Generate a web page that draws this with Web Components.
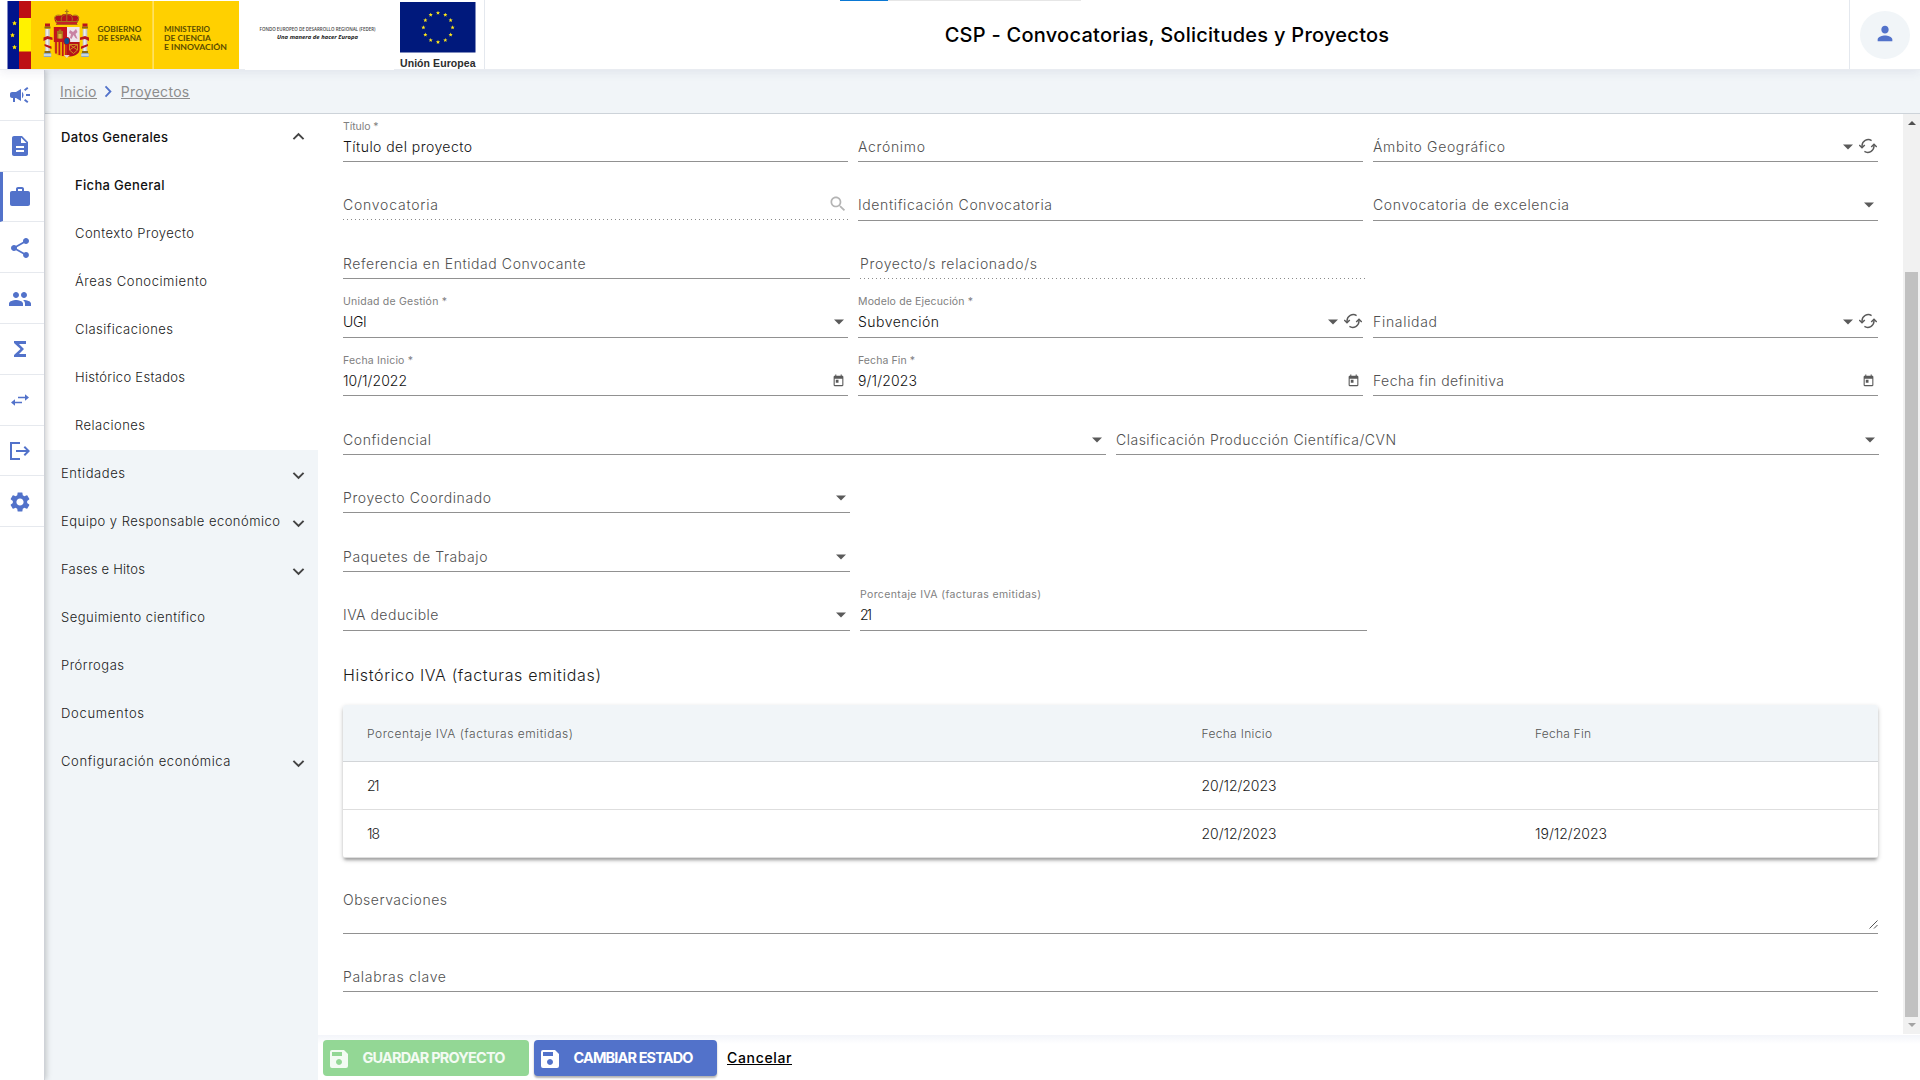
<!DOCTYPE html>
<html lang="es">
<head>
<meta charset="utf-8">
<title>CSP - Convocatorias, Solicitudes y Proyectos</title>
<style>
html,body{margin:0;height:100%;overflow:hidden;background:#fff}
body{font-family:Inter,"Open Sans",sans-serif;font-size:14px;font-weight:300;color:#212121}
</style>
</head>
<body>
<app-shell></app-shell>
<script>
const ICONS = {
  campaign:'<path d="M18 11v2h4v-2h-4zm-2 6.61c.96.71 2.21 1.65 3.2 2.39.4-.53.8-1.07 1.2-1.6-.99-.74-2.24-1.68-3.2-2.4-.4.54-.8 1.08-1.2 1.61zM20.4 5.6c-.4-.53-.8-1.07-1.2-1.6-.99.74-2.24 1.68-3.2 2.4.4.53.8 1.07 1.2 1.6.96-.72 2.21-1.65 3.2-2.4zM4 9c-1.100 0-2 .9-2 2v2c0 1.100.9 2 2 2h1v4h2v-4h1l5 3V6L8 9H4zm11.500 3c0-1.330-.58-2.530-1.500-3.350v6.690c.92-.81 1.500-2.010 1.500-3.340z"/>',
  description:'<path d="M14 2H6c-1.100 0-1.990.9-1.990 2L4 20c0 1.100.89 2 1.990 2H18c1.100 0 2-.9 2-2V8l-6-6zm2 16H8v-2h8v2zm0-4H8v-2h8v2zm-3-5V3.500L18.500 9H13z"/>',
  work:'<path d="M20 6h-4V4c0-1.110-.89-2-2-2h-4c-1.110 0-2 .89-2 2v2H4c-1.110 0-1.990.89-1.990 2L2 19c0 1.110.89 2 2 2h16c1.110 0 2-.89 2-2V8c0-1.110-.89-2-2-2zm-6 0h-4V4h4v2z"/>',
  share:'<path d="M18 16.080c-.76 0-1.440.3-1.960.77L8.910 12.700c.05-.23.090-.46.090-.7s-.040-.47-.090-.7l7.050-4.110c.54.5 1.250.81 2.040.81 1.660 0 3-1.340 3-3s-1.340-3-3-3-3 1.340-3 3c0 .24.040.47.090.7L8.040 9.810C7.500 9.310 6.790 9 6 9c-1.660 0-3 1.340-3 3s1.340 3 3 3c.79 0 1.500-.31 2.040-.81l7.120 4.160c-.05.21-.08.430-.08.650 0 1.610 1.310 2.920 2.920 2.920s2.920-1.310 2.920-2.920-1.310-2.920-2.920-2.920z"/>',
  people:'<path d="M16 11c1.660 0 2.990-1.340 2.990-3S17.660 5 16 5s-3 1.340-3 3 1.340 3 3 3zm-8 0c1.660 0 2.990-1.340 2.990-3S9.660 5 8 5 5 6.340 5 8s1.340 3 3 3zm0 2c-2.330 0-7 1.170-7 3.500V19h14v-2.500c0-2.330-4.670-3.500-7-3.500zm8 0c-.29 0-.62.020-.97.050 1.160.84 1.970 1.970 1.970 3.450V19h6v-2.500c0-2.330-4.670-3.500-7-3.500z"/>',
  functions:'<path d="M18 4H6v2l6.500 6L6 18v2h12v-3h-7l5-5-5-5h7z"/>',
  swap:'<path d="M6.990 11L3 15l3.990 4v-3H14v-2H6.990v-3zM21 9l-3.990-4v3H10v2h7.010v3L21 9z"/>',
  exit:'<path d="M2 3h10v2H4v14h8v2H2zM8 11h10.200l-2.600-2.600L17 7l5 5-5 5-1.400-1.400 2.600-2.600H8z"/>',
  settings:'<path d="M19.140 12.940c.04-.3.060-.61.060-.94 0-.32-.020-.64-.070-.94l2.030-1.580c.18-.14.230-.41.120-.61l-1.920-3.320c-.12-.22-.37-.29-.59-.22l-2.390.96c-.5-.38-1.030-.7-1.620-.94l-.36-2.540c-.04-.24-.24-.41-.48-.41h-3.840c-.24 0-.43.17-.47.41l-.36 2.540c-.59.24-1.130.57-1.620.94l-2.390-.96c-.22-.08-.47 0-.59.22L2.740 8.870c-.12.21-.08.470.12.61l2.030 1.580c-.05.3-.09.630-.09.94s.02.640.07.940l-2.030 1.580c-.18.140-.23.410-.12.610l1.920 3.320c.12.220.37.290.59.220l2.390-.96c.5.380 1.030.7 1.620.94l.36 2.540c.05.240.24.410.48.410h3.840c.24 0 .44-.17.470-.41l.36-2.540c.59-.24 1.130-.56 1.620-.94l2.390.96c.22.080.470 0 .59-.22l1.920-3.320c.12-.22.070-.47-.12-.61l-2.010-1.580zM12 15.600c-1.980 0-3.600-1.620-3.600-3.600s1.620-3.600 3.600-3.600 3.600 1.620 3.600 3.600-1.620 3.600-3.600 3.600z"/>',
  person:'<path d="M12 12c2.210 0 4-1.790 4-4s-1.790-4-4-4-4 1.790-4 4 1.790 4 4 4zm0 2c-2.670 0-8 1.340-8 4v2h16v-2c0-2.660-5.330-4-8-4z"/>',
  down:'<path d="M7.410 8.590 12 13.170l4.590-4.580L18 10l-6 6-6-6z"/>',
  up:'<path d="M12 8l-6 6 1.410 1.410L12 10.830l4.590 4.580L18 14z"/>',
  right:'<path d="M8.590 16.590 13.170 12 8.590 7.410 10 6l6 6-6 6z"/>',
  search:'<path d="M15.500 14h-.79l-.28-.27C15.410 12.590 16 11.110 16 9.500 16 5.910 13.090 3 9.500 3S3 5.910 3 9.500 5.910 16 9.500 16c1.610 0 3.090-.59 4.230-1.570l.27.28v.79l5 4.990L20.490 19l-4.990-5zm-6 0C7.010 14 5 11.990 5 9.500S7.010 5 9.500 5 14 7.010 14 9.500 11.990 14 9.500 14z"/>',
  today:'<path d="M19 3h-1V1h-2v2H8V1H6v2H5c-1.110 0-1.990.9-1.990 2L3 19c0 1.100.89 2 2 2h14c1.100 0 2-.9 2-2V5c0-1.100-.9-2-2-2zm0 16H5V8h14v11zM7 10h5v5H7z"/>',
  save:'<path d="M4 3h13l4 4v12a2 2 0 0 1-2 2H5a2 2 0 0 1-2-2V5a2 2 0 0 1 2-2zM5 5v4h10V5zM12 12a3 3 0 1 0 .01 0z" fill-rule="evenodd"/>',
  caret:'<path d="M0 6h24L12 18z"/>',
  refresh:'<g fill="none" stroke="currentColor" stroke-width="1.900"><path d="M16.800 4.700A8.500 8.500 0 0 0 4 12v2M7.200 19.300A8.500 8.500 0 0 0 20 12v-2"/><path d="M.3 10.700 4 14.400l3.700-3.700M16.300 13.300 20 9.600l3.700 3.700"/></g>'
};

function define(name, render, after){
  customElements.define(name, class extends HTMLElement{
    connectedCallback(){
      if(this.shadowRoot) return;
      this.attachShadow({mode:'open'}).innerHTML = render(this);
      if(after) after(this);
    }
  });
}
const a = (el,n,d='') => el.getAttribute(n) ?? d;
const fit = (t,w) => t ? `<fit-text w="${w}">${t}</fit-text>` : '';

define('ui-icon', el => `<style>:host{display:inline-flex;flex:none;width:${a(el,'s','24')}px;height:${a(el,'h',a(el,'s','24'))}px}svg{width:100%;height:100%;display:block;fill:currentColor}</style>
<svg viewBox="0 0 24 24" preserveAspectRatio="none">${ICONS[a(el,'name')]}</svg>`);

define('spain-logo', () => {
  const tower = x => `<g transform="translate(${x} 0)"><path fill="#c9c9cf" d="M-2.300 29h4.600v22h-4.600z"/><path fill="#eee" d="M-1.200 29H.6v22h-1.800z"/><path fill="#8b6a16" d="M-3 26.500h6v2h-6zM-3 51h6v2h-6z"/><path fill="#b9151d" d="M-2.500 23.500h5v3h-5z"/><path fill="#8faac4" d="M-3.700 53h7.400v4h-7.400z"/><path fill="#fff" d="M-3.700 54.500h7.400v1h-7.400z"/></g>`;
  return `<style>:host{display:block;flex:none}svg{display:block;font-family:Lato,sans-serif}</style>
<svg width="240" height="69" viewBox="0 0 240 69">
<rect x="7.500" y="1" width="12" height="68" fill="#00148c"/>
<rect x="19" y="1" width="12" height="68" fill="#bd0f14"/><rect x="19" y="18" width="12" height="33.500" fill="#fff200"/>
<rect x="31" y="1" width="208" height="68" fill="#ffd000"/><rect x="152.500" y="1" width="1.200" height="68" fill="#ffe88a"/>
<g fill="#ffe600"><path id="st" d="M14.500 20.700l.7 1.500 1.700.2-1.200 1.100.3 1.700-1.500-.8-1.500.8.300-1.700-1.200-1.100 1.700-.2z"/><use href="#st" x="-2" y="12"/><use href="#st" y="24"/></g>
${tower(47.500)}${tower(85)}
<path fill="#b9151d" d="M43.500 37.500l4-1.500 5 1.500v2.500l-5-1-4 2zM89 37.500l-4-1.500-5 1.500v2.500l5-1 4 2zM44.500 44l7 2.500v2.500l-7-3zM88 44l-7 2.500v2.500l7-3z"/>
<path fill="#b5121b" d="M56 22.500c-4-5 1-8.500 5-6.500 1-3 10.500-3 11.500 0 4-2 9 1.500 5 6.500z"/>
<path fill="none" stroke="#a8741c" stroke-width="1" d="M57 21c-5-4-1-7 4-5.500M76.500 21c5-4 1-7-4-5.500M62 22c-2-4 0-7.500 4.800-7.500s6.800 3.500 4.800 7.500M66.800 14v8"/>
<path fill="#a8741c" d="M66.200 9.500h1.200v5h-1.200zM64.900 11h3.800v1.100h-3.800zM55.500 21h22.500v1.400H55.500zM56 24h21.500v1H56z"/><path fill="#c32127" d="M56.500 22h20.500v2.300H56.500z"/>
<path fill="#c2141c" d="M53.800 27H67v15H53.800z"/><path fill="#a8741c" d="M57 31h1.700v-1.500h2.600V31H63v7.500h-6z"/><path fill="#e0b23a" d="M58.400 34h3.200v4.500h-3.200z"/>
<path fill="#efe6ec" d="M67 27h12.600v15H67z"/><path fill="#c983a3" d="M70 30l3 2 3-3 1.500 3-2 2 2 5-2-1-2-3-2 4-1.500-1 1-4-2-1z"/>
<path fill="#f0b000" d="M53.800 42H67v14.500c-5 .5-13-1-13.200-6z"/><path stroke="#c2141c" stroke-width="1.700" d="M56 42v11.500M59.400 42v13M62.800 42v14M66 42v14"/>
<path fill="#b5121b" d="M67 42h12.600v8c-.5 5-7.600 7-12.600 6.500z"/><path fill="none" stroke="#d29a23" stroke-width=".9" d="M69.500 44.500h8v5.500l-4 3.500-4-3.500zM69.500 44.500l8 5.500M77.500 44.500l-8 5.500"/>
<ellipse cx="66.800" cy="41" rx="3.400" ry="4" fill="#b5121b"/><ellipse cx="66.800" cy="41" rx="2.500" ry="3.100" fill="#0b4f94"/>
<path fill="#e8d3c8" d="M63.800 55h6l-3 3z"/>
<g fill="#5c4d00" font-weight="700" font-size="7.600"><text x="97.500" y="31.800" textLength="44" lengthAdjust="spacingAndGlyphs">GOBIERNO</text><text x="97.500" y="41" textLength="44" lengthAdjust="spacingAndGlyphs">DE ESPAÑA</text>
<text x="164" y="31.800" textLength="46" lengthAdjust="spacingAndGlyphs">MINISTERIO</text><text x="164" y="41" textLength="47" lengthAdjust="spacingAndGlyphs">DE CIENCIA</text><text x="164" y="50" textLength="63" lengthAdjust="spacingAndGlyphs">E INNOVACIÓN</text></g>
</svg>`});

define('feder-logo', () => `<style>:host{display:block;flex:none;background:#fff;height:70px;position:relative;z-index:2}svg{display:block}</style>
<svg width="149" height="70" viewBox="0 0 149 70" font-family="Open Sans,sans-serif"><text x="14.500" y="31" font-size="4.400" font-weight="600" fill="#444" textLength="116" lengthAdjust="spacingAndGlyphs">FONDO EUROPEO DE DESARROLLO REGIONAL (FEDER)</text>
<text x="32" y="38.600" font-size="5.800" font-weight="700" font-style="italic" fill="#222" textLength="81" lengthAdjust="spacingAndGlyphs">Una manera de hacer Europa</text></svg>`);

define('eu-logo', () => {
  let s='';
  for(let i=0;i<12;i++){const t=i*Math.PI/6,cx=44+14.600*Math.sin(t),cy=27.500-14.600*Math.cos(t);let p=[];
    for(let k=0;k<10;k++){const r=k%2?0.95:2.200,u=k*Math.PI/5;p.push((cx+r*Math.sin(u)).toFixed(2)+','+(cy-r*Math.cos(u)).toFixed(2));}
    s+=`<polygon points="${p.join(' ')}"/>`;}
  return `<style>:host{display:block;flex:none;height:69px;border-right:1px solid #e4e8ee}svg{display:block}</style>
<svg width="90" height="69" viewBox="0 0 90 69"><rect x="6" y="2" width="75.500" height="50.500" fill="#00197c"/><g fill="#ffe81a">${s}</g>
<text x="6" y="66.800" font-family="Liberation Sans" font-weight="700" font-size="10.500" fill="#2c2c2c" textLength="75.500">Unión Europea</text></svg>`});

define('app-header', () => `<style>
:host{display:flex;height:69px;flex:none;background:#fff;border-bottom:1px solid #e9ecf1;position:relative;z-index:3;box-shadow:0 2px 10px rgba(60,60,110,.09)}
spain-logo{margin-right:5px}
.title{flex:1;display:flex;justify-content:center;align-items:center;font-size:20px;font-weight:500;color:#000}
.user{width:70px;border-left:1px solid #e4e8ee;display:flex;justify-content:center;align-items:center}
.av{width:50px;height:48px;border-radius:50%;background:#f1f5f8;color:#5272ca;display:flex;justify-content:center;align-items:center}
ui-icon{margin-bottom:2px}
.bar{position:absolute;top:0;left:840px;width:241px;height:1px;background:linear-gradient(90deg,#0a78d4 48px,#e6e6e6 48px)}
</style><spain-logo></spain-logo><feder-logo></feder-logo><eu-logo></eu-logo><div class="title">${fit('CSP - Convocatorias, Solicitudes y Proyectos',444.500)}</div>
<div class="user"><div class="av"><ui-icon name="person" s="22" h="23"></ui-icon></div></div><div class="bar"></div>`);

define('nav-rail', () => `<style>
:host{display:block;flex:none;width:44px;background:#fff;border-right:1px solid #cfd2d8;box-shadow:1px 0 6px rgba(0,0,0,.22);position:relative;z-index:2;color:#5272ca}
.i{height:50.800px;box-sizing:border-box;border-bottom:1px solid #e6e9ee;display:flex;align-items:center;padding-left:8px;padding-top:1px}
.on{border-left:3px solid #5272ca;padding-left:5px}
.i:nth-of-type(3),.i:nth-of-type(4),.i:nth-of-type(n+8){padding-top:2px}
</style>${['campaign','description','work','share','people','functions','swap','exit','settings'].map((n,i)=>`<div class="i ${i==2?'on':''}"><ui-icon name="${n}" ${n=='swap'?'s="24" h="20"':''}></ui-icon></div>`).join('')}`);

define('bread-crumb', () => `<style>
:host{display:flex;flex:none;height:43px;background:#f1f5f8;border-bottom:1px solid #cdd3d9;box-sizing:content-box;align-items:center;padding-left:15px;color:#8d8d8d;font-weight:400}
u{text-decoration:none;border-bottom:1px solid #8d8d8d;line-height:16px;height:14px;margin-top:0;font-size:14px}
ui-icon{color:#5272ca;margin:0 1px 0 0}
.c{width:24px;display:flex;justify-content:center}
</style><u>${fit('Inicio',36.500)}</u><span class="c"><ui-icon name="right" s="22" h="23"></ui-icon></span><u>${fit('Proyectos',68.500)}</u>`);

define('menu-item', el => `<style>
:host{display:flex;height:48px;align-items:center;justify-content:space-between;padding:0 8.500px 2px 16px;box-sizing:border-box;font-size:13px;color:#1a1a1a}
:host([open]){background:#fff}:host([open]),:host([sub]){background:#fff}:host([sub]){padding-left:30px}
:host([bold]){font-weight:500;color:#111}
ui-icon{color:#444;margin-top:${el.hasAttribute('open')?'-2px':'5px'}}
</style><fit-text w="${a(el,'w')}"><slot></slot></fit-text>${a(el,'chev')?`<ui-icon name="${a(el,'chev')}" s="23"></ui-icon>`:''}`);

define('side-menu', () => `<style>:host{display:block;flex:none;width:273px;background:#f1f5f8}</style>
<menu-item open bold chev="up" w="107">Datos Generales</menu-item>
<menu-item sub bold w="89.500">Ficha General</menu-item>
<menu-item sub w="119">Contexto Proyecto</menu-item>
<menu-item sub w="132">Áreas Conocimiento</menu-item>
<menu-item sub w="98">Clasificaciones</menu-item>
<menu-item sub w="110">Histórico Estados</menu-item>
<menu-item sub w="70">Relaciones</menu-item>
<menu-item chev="down" w="64">Entidades</menu-item>
<menu-item chev="down" w="219">Equipo y Responsable económico</menu-item>
<menu-item chev="down" w="84">Fases e Hitos</menu-item>
<menu-item w="144">Seguimiento científico</menu-item>
<menu-item w="63">Prórrogas</menu-item>
<menu-item w="83">Documentos</menu-item>
<menu-item chev="down" w="169.500">Configuración económica</menu-item>`);

define('form-field', el => `<style>
:host{display:flex;flex-direction:column;justify-content:flex-end;flex:none;width:${a(el,'width')}px;box-sizing:border-box;height:100%}
.lab{font-size:10.500px;line-height:14px;color:#808080;font-weight:400;margin-bottom:3px}
.row{display:flex;align-items:center;height:20px;padding-bottom:var(--pb,4px);color:${el.hasAttribute('filled')?'#111':'#505050'}}
.row fit-text{line-height:20px;flex:1}
.row ui-icon{color:#5a5a5a}
.line{height:1px;background:#919191}
:host([disabled]) .line{background:repeating-linear-gradient(90deg,#8a8a8a 0 1px,transparent 1px 4px)}
:host([disabled]) .row{padding-bottom:4px}
:host([disabled]) .line{margin-bottom:${a(el,'icon')=='search'?'1px':'0'}}
.caret{margin:0 4px 0 0}.r{margin:-3px 1px 0 6px}.s{color:#b4b4b4!important;margin:-3px 0 0 0}.d{margin-right:3.500px}
:host([area]) .row{height:39px;align-items:flex-start}
:host([area]) .row ui-icon{align-self:flex-end}
.grip{align-self:flex-end;width:9px;height:9px}
</style>${a(el,'label')?`<div class="lab">${fit(a(el,'label'),a(el,'lw'))}</div>`:''}
<div class="row"><fit-text w="${a(el,'w')}"><slot></slot></fit-text>${({
 caret:'<ui-icon class="caret" name="caret" s="10" h="10"></ui-icon>',
 refresh:'<ui-icon class="caret" style="margin:0" name="caret" s="10" h="10"></ui-icon><ui-icon class="r" name="refresh" s="18" h="18"></ui-icon>',
 search:'<ui-icon class="s" name="search" s="20"></ui-icon>',
 date:'<ui-icon class="d" name="today" s="13" h="14"></ui-icon>',
 grip:'<svg class="grip" viewBox="0 0 9 9"><path d="M.5 8.500l8-8M5 8.500l3.500-3.500" stroke="#555" fill="none"/></svg>'
})[a(el,'icon')]||''}</div><div class="line"></div>`);

define('form-row', el => `<style>:host{display:flex;height:${a(el,'h')}px;gap:${a(el,'gap','10')}px;flex:none}:host([up]){--pb:5px}</style><slot></slot>`);

define('iva-table', () => `<style>
:host{display:block;margin-top:12px;width:1535px;border-radius:3px;overflow:visible;background:#fff;box-shadow:0 3px 3px -1px rgba(0,0,0,.26),0 2px 5px rgba(0,0,0,.2)}
.r{display:grid;grid-template-columns:834.500px 333.500px 1fr;padding-left:24px;height:47px;align-items:center;border-bottom:1px solid #dedede;color:#1a1a1a;line-height:20px}
.h{height:55px;padding-top:1px;background:#f1f5f8;font-size:12px;color:#555;border-color:#d2d5d8;border-radius:3px 3px 0 0}
</style>
<div class="r h">${fit('Porcentaje IVA (facturas emitidas)',206)}${fit('Fecha Inicio',70.500)}${fit('Fecha Fin',56)}</div>
<div class="r">${fit('21',12.500)}${fit('20/12/2023',75)}</div>
<div class="r">${fit('18',13)}${fit('20/12/2023',75)}${fit('19/12/2023',72)}</div>`);

define('project-form', () => `<style>
:host{display:flex;flex-direction:column;flex:1;min-width:0;padding-left:25px;background:#fff;overflow:hidden}
h2{margin:0;height:62px;font-size:16px;font-weight:300;line-height:22px;color:#1a1a1a;display:flex;align-items:flex-end;box-sizing:border-box;padding-bottom:7px}
</style>
<form-row h="48"><form-field width="505" filled label="Título *" lw="35.500" w="129">Título del proyecto</form-field><form-field width="505" w="67">Acrónimo</form-field><form-field width="505" icon="refresh" w="132">Ámbito Geográfico</form-field></form-row>
<form-row h="59" up><form-field width="505" disabled icon="search" w="95">Convocatoria</form-field><form-field width="505" w="194">Identificación Convocatoria</form-field><form-field width="505" icon="caret" w="196">Convocatoria de excelencia</form-field></form-row>
<form-row h="58"><form-field width="507" w="242.500">Referencia en Entidad Convocante</form-field><form-field width="506" disabled w="177">Proyecto/s relacionado/s</form-field></form-row>
<form-row h="59" up><form-field width="505" filled label="Unidad de Gestión *" lw="104" icon="caret" w="23.700">UGI</form-field><form-field width="505" filled label="Modelo de Ejecución *" lw="115" icon="refresh" w="81">Subvención</form-field><form-field width="505" icon="refresh" w="64">Finalidad</form-field></form-row>
<form-row h="58"><form-field width="505" filled label="Fecha Inicio *" lw="70" icon="date" w="64">10/1/2022</form-field><form-field width="505" filled label="Fecha Fin *" lw="57" icon="date" w="59">9/1/2023</form-field><form-field width="505" icon="date" w="131">Fecha fin definitiva</form-field></form-row>
<form-row h="59"><form-field width="763" icon="caret" w="88">Confidencial</form-field><form-field width="763" icon="caret" w="280">Clasificación Producción Científica/CVN</form-field></form-row>
<form-row h="58"><form-field width="507" icon="caret" w="148">Proyecto Coordinado</form-field></form-row>
<form-row h="59"><form-field width="507" icon="caret" w="144.500">Paquetes de Trabajo</form-field></form-row>
<form-row h="59" up><form-field width="507" icon="caret" w="95.500">IVA deducible</form-field><form-field width="507" filled label="Porcentaje IVA (facturas emitidas)" lw="181" w="12">21</form-field></form-row>
<h2>${fit('Histórico IVA (facturas emitidas)',258)}</h2>
<iva-table></iva-table>
<form-row h="76"><form-field width="1535" area icon="grip" w="104">Observaciones</form-field></form-row>
<form-row h="58"><form-field width="1535" w="103">Palabras clave</form-field></form-row>`);

define('scroll-bar', () => `<style>
:host{display:flex;flex-direction:column;align-items:center;flex:none;width:17px;height:920px;background:#f1f1f1;box-sizing:border-box;padding:7px 0 7px}
i{width:0;height:0;border:4px solid transparent;border-top:0}
.u{border-bottom-color:#505050}.d{border-top:4px solid #a3a3a3;border-bottom:0;margin-top:6px}
.t{width:13px;height:745px;margin-top:147px;background:#c1c1c1}
</style><i class="u"></i><div class="t"></div><i class="d"></i>`);

define('ui-button', el => `<style>
:host{display:flex;align-items:center;height:36px;width:${a(el,'width')}px;border-radius:4px;background:#93d795;color:#f3fbf3;font-size:14.500px;font-weight:700;box-sizing:border-box;padding-left:4px;gap:11.500px}
:host([primary]){background:#5272ca;color:#fff;box-shadow:0 2px 2px rgba(0,0,0,.3)}
ui-icon{margin-top:1px}fit-text{margin-top:-1px}
</style><ui-icon name="save"></ui-icon><fit-text w="${a(el,'w')}"><slot></slot></fit-text>`);

define('action-bar', () => `<style>
:host{display:flex;flex:none;height:45px;box-sizing:border-box;padding:5px 0 0 5px;gap:5px;background:linear-gradient(#f3f5fa,#fff 9px)}
a{margin-left:5px;font-weight:500;color:#000;display:flex;align-items:center;height:34px}
a span{border-bottom:1px solid #000;height:14px;line-height:15px;margin-top:0}
</style><ui-button width="206" w="143">GUARDAR PROYECTO</ui-button><ui-button primary width="183" w="120">CAMBIAR ESTADO</ui-button><a><span>${fit('Cancelar',64.500)}</span></a>`);

define('app-shell', () => `<style>
:host{display:flex;flex-direction:column;width:1920px;height:1080px;background:#fff}
.b{flex:1;display:flex;min-height:0}.m{flex:1;display:flex;flex-direction:column;min-width:0}
.c{flex:1;display:flex;min-height:0}.w{flex:1;display:flex;flex-direction:column;min-width:0}.f{flex:1;display:flex;min-height:0}
</style><app-header></app-header><div class="b"><nav-rail></nav-rail><div class="m"><bread-crumb></bread-crumb><div class="c"><side-menu></side-menu><div class="w"><div class="f"><project-form></project-form><scroll-bar></scroll-bar></div><action-bar></action-bar></div></div></div></div>`);

/* Tracks its text so that it spans the requested width; registered last so inherited fonts are settled. */
define('fit-text', () => `<style>:host{display:block;white-space:nowrap}</style><span><slot></slot></span>`, el => {
  const w = parseFloat(a(el,'w')), s = el.shadowRoot.querySelector('span');
  const slot = el.querySelector('slot');
  const text = (slot ? slot.assignedNodes().map(n=>n.textContent).join('') : el.textContent).trim();
  const nat = s.getBoundingClientRect().width;
  if(w && nat && text.length>1) s.style.letterSpacing = ((w-nat)/(text.length-1)).toFixed(3)+'px';
});
</script>
</body>
</html>
